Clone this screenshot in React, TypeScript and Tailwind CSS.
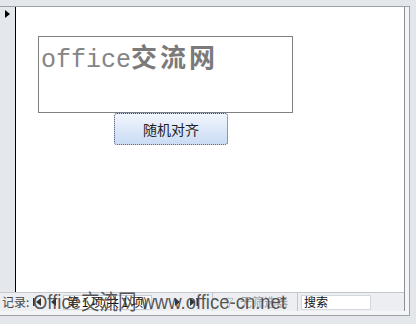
import { Filter } from "lucide-react";

const cjk = '"Noto Sans CJK SC", sans-serif';

function NavArrow({ dir, bar }: { dir: "l" | "r"; bar?: boolean }) {
    return (
        <svg width="9" height="10" viewBox="0 0 9 10" className="shrink-0">
            {dir === "l" ? (
                <>
                    {bar && <rect x="0" y="1" width="1.5" height="8" fill="#333" />}
                    <path d="M8 1 L3 5 L8 9 Z" fill="#333" />
                </>
            ) : (
                <>
                    <path d="M1 1 L6 5 L1 9 Z" fill="#333" />
                    {bar && <rect x="7.5" y="1" width="1.5" height="8" fill="#333" />}
                </>
            )}
        </svg>
    );
}

export default function App() {
    return (
        <div className="relative w-[416px] h-[324px] overflow-hidden bg-[#e3e6ea] pt-[6px]" style={{ fontFamily: cjk }}>
            {/* form frame */}
            <div className="w-[410px] h-[310px] border-t border-r border-b border-[#9ea2a8] bg-[#f4f5f6] pr-[4px] pb-[4px]">
                <div className="flex flex-col h-full border-r border-[#8c8f95]">
                    <div className="flex h-[285px]">
                        {/* record selector */}
                        <div className="w-[16px] shrink-0 bg-[#e4e7ec] border-r border-black pt-[3px] pl-[5px]">
                            <svg width="5" height="8" viewBox="0 0 5 8">
                                <path d="M0 0 L5 4 L0 8 Z" fill="#000" />
                            </svg>
                        </div>
                        {/* detail area */}
                        <div className="flex-1 bg-white pt-[29px]">
                            <div className="ml-[22px] w-[255px] h-[77px] border border-[#808080] pl-[2px] pt-[4px]">
                                <span className="text-[25px] leading-[30px] text-[#858585]" style={{ fontFamily: '"Liberation Mono", "Noto Sans CJK SC", monospace' }}>
                                    office
                                    <span className="text-[26px] font-bold tracking-[3px] text-[#7a7a7a]" style={{ fontFamily: cjk }}>交流网</span>
                                </span>
                            </div>
                            <button className="ml-[98px] w-[114px] h-[32px] flex items-center justify-center rounded-[3px] border border-dotted border-[#3c4b6a] bg-gradient-to-b from-[#f2f6fd] to-[#cadcf4] text-[14px] text-[#222]">
                                随机对齐
                            </button>
                        </div>
                    </div>
                    {/* navigation bar */}
                    <div className="h-[19px] flex items-center border-t border-[#c4c7cc] bg-[#eceef1] text-[12px] text-[#444] pl-[2px]">
                        <span className="w-[31px]">记录:</span>
                        <div className="flex items-center gap-[6px] w-[30px]">
                            <NavArrow dir="l" bar />
                            <NavArrow dir="l" />
                        </div>
                        <div className="w-[89px] h-[15px] bg-white border border-[#c9ccd1] flex items-center pl-[3px] text-[12px] text-[#111] whitespace-nowrap">
                            第 1 项(共 1 项)
                        </div>
                        <div className="flex items-center gap-[6px] ml-[22px] w-[36px]">
                            <NavArrow dir="r" />
                            <NavArrow dir="r" bar />
                        </div>
                        <div className="h-full border-l border-[#c4c7cc] ml-[2px] flex items-center pl-[10px] w-[85px] text-[#a0a3a8]">
                            <Filter size={11} strokeWidth={1.5} className="mr-[6px]" />
                            无筛选器
                        </div>
                        <div className="h-full border-l border-[#c4c7cc] flex items-center pl-[3px]">
                            <div className="w-[70px] h-[15px] bg-white border border-[#d4d7db] flex items-center pl-[2px] text-[#111]">搜索</div>
                        </div>
                    </div>
                </div>
            </div>

            {/* watermark */}
            <div
                className="absolute left-[33px] top-[288px] text-[21px] leading-[28px] scale-x-[0.88] origin-left text-[#3a3a3a]/85 whitespace-nowrap pointer-events-none"
                style={{ fontFamily: '"Liberation Sans", "Noto Sans CJK SC", sans-serif' }}
            >
                Office交流网 www.office-cn.net
            </div>
        </div>
    );
}
